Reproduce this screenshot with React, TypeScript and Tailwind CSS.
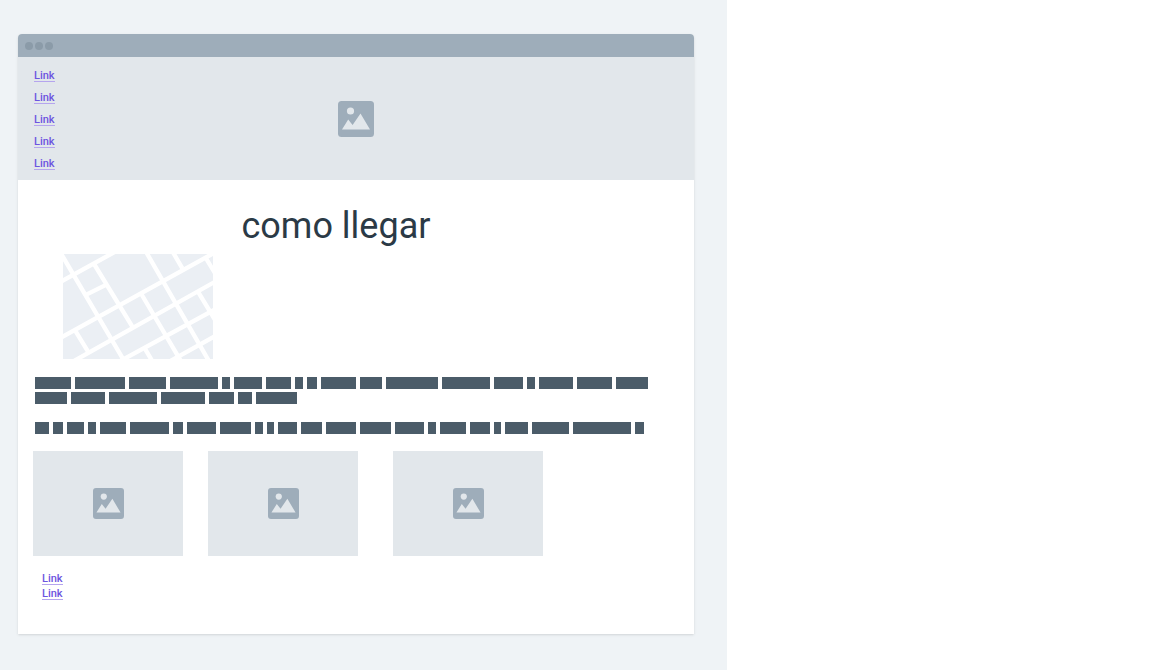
const heroLinks = ['Link', 'Link', 'Link', 'Link', 'Link'];
const footerLinks = ['Link', 'Link'];

const paragraphs = [
  [36, 50, 37, 48, 8, 28, 25, 8, 10, 35, 22, 52, 48, 29, 8, 34, 35, 32, 32, 34, 48, 44, 25, 14, 41],
  [14, 10, 17, 8, 26, 39, 10, 29, 31, 8, 7, 19, 21, 30, 31, 29, 8, 26, 20, 7, 23, 37, 58, 9],
];

function PictureIcon({ className }: { className: string }) {
  return (
    <svg viewBox="0 0 36 36" className={className} aria-hidden="true">
      <rect width="36" height="36" rx="3.5" fill="#9eadba" />
      <circle cx="12.5" cy="10" r="3.6" fill="#e2e7eb" />
      <path d="M4 28.5 10.2 18.5 14.6 24 22.5 12.5 32 28.5Z" fill="#e2e7eb" />
    </svg>
  );
}

function StreetMap() {
  return (
    <svg viewBox="0 0 450 315" className="h-[105px] w-[150px] bg-[#ebeff4]" role="img" aria-label="Map">
      <g stroke="#fff" strokeWidth="13" fill="none">
        <path d="M-10 85 155-6M70 122 132 91M-10 253 460-7M-10 345 460 81M170 322 460 164M315 325 460 244" />
        <path d="M-8-5 186 325M95 33 208 218M38 232 77 296M250-5 440 325M330-5 358 43M426 8 457 59M235 120 356 325M403 110 457 199M247 286 270 325" />
      </g>
    </svg>
  );
}

function TextLink({ children }: { children: string }) {
  return (
    <a
      href="#"
      className="block h-[13px] border-b border-[#b5a5ee] text-[11px] leading-[14px] font-medium text-[#6d55e0]"
    >
      {children}
    </a>
  );
}

export default function App() {
  return (
    <div className="min-h-screen bg-white font-['Roboto',sans-serif]">
      <div className="min-h-screen w-[63.1%] bg-[#eff3f6] pt-[34px] pr-[33px] pb-9 pl-[18px]">
        <main className="overflow-hidden rounded-t bg-white pb-[34px] shadow-sm">
          <div className="flex h-[23px] items-center gap-0.5 bg-[#9eadba] px-[7px]">
            <span className="size-2 rounded-full bg-[#8b9ba8]" />
            <span className="size-2 rounded-full bg-[#8b9ba8]" />
            <span className="size-2 rounded-full bg-[#8b9ba8]" />
          </div>
          <header className="grid grid-cols-[1fr_auto_1fr] items-center bg-[#e2e7eb] px-4">
            <nav className="flex flex-col items-start gap-[9px] pt-3 pb-2.5">
              {heroLinks.map((label, i) => (
                <TextLink key={i}>{label}</TextLink>
              ))}
            </nav>
            <PictureIcon className="size-9" />
          </header>
          <h1 className="pt-[18px] pr-10 text-center text-[36px] leading-[56px] text-[#2b3a46]">como llegar</h1>
          <div className="pl-[45px]">
            <StreetMap />
          </div>
          <div className="flex flex-col gap-[18px] pt-[18px] pr-10 pl-[17px]">
            {paragraphs.map((words, i) => (
              <div key={i} className="flex flex-wrap gap-x-1 gap-y-[3px]">
                {words.map((width, j) => (
                  <span key={j} className="h-3 bg-[#4b5c69]" style={{ width }} />
                ))}
              </div>
            ))}
          </div>
          <div className="flex pt-[17px] pl-[15px]">
            <div className="mr-[25px] flex h-[105px] w-[150px] items-center justify-center bg-[#e2e7eb]">
              <PictureIcon className="size-[31px]" />
            </div>
            <div className="mr-[35px] flex h-[105px] w-[150px] items-center justify-center bg-[#e2e7eb]">
              <PictureIcon className="size-[31px]" />
            </div>
            <div className="flex h-[105px] w-[150px] items-center justify-center bg-[#e2e7eb]">
              <PictureIcon className="size-[31px]" />
            </div>
          </div>
          <footer className="flex flex-col items-start gap-0.5 pt-4 pl-6">
            {footerLinks.map((label, i) => (
              <TextLink key={i}>{label}</TextLink>
            ))}
          </footer>
        </main>
      </div>
    </div>
  );
}
